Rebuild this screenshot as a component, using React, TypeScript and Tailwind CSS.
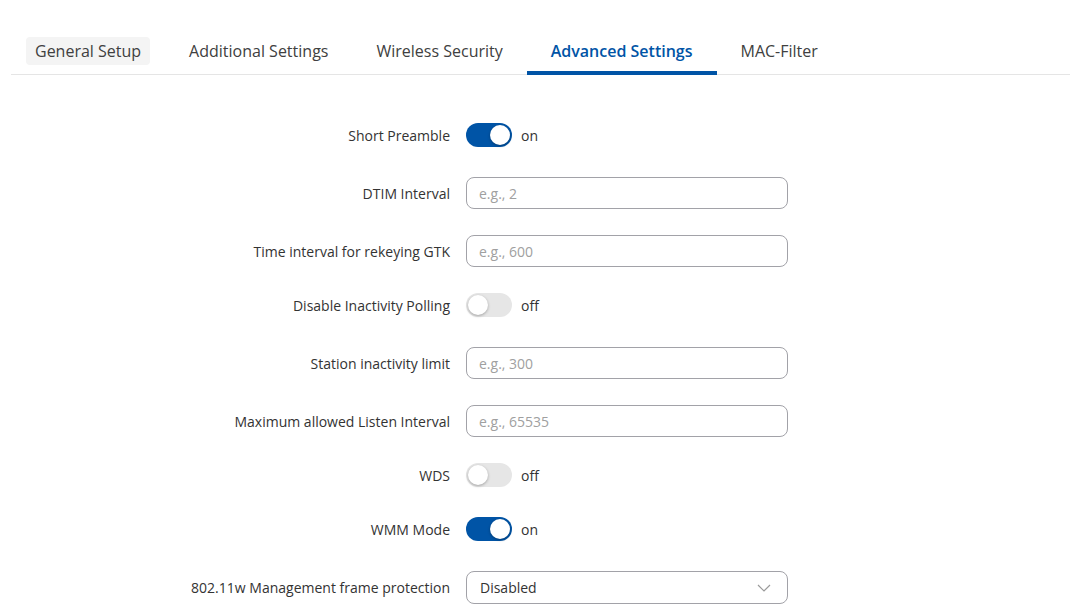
import { useState } from "react";

const tabs = ["General Setup", "Additional Settings", "Wireless Security", "Advanced Settings", "MAC-Filter"];

type Row =
  | { kind: "toggle"; label: string; on: boolean }
  | { kind: "input"; label: string; placeholder: string }
  | { kind: "select"; label: string; value: string };

const rows: Row[] = [
  { kind: "toggle", label: "Short Preamble", on: true },
  { kind: "input", label: "DTIM Interval", placeholder: "e.g., 2" },
  { kind: "input", label: "Time interval for rekeying GTK", placeholder: "e.g., 600" },
  { kind: "toggle", label: "Disable Inactivity Polling", on: false },
  { kind: "input", label: "Station inactivity limit", placeholder: "e.g., 300" },
  { kind: "input", label: "Maximum allowed Listen Interval", placeholder: "e.g., 65535" },
  { kind: "toggle", label: "WDS", on: false },
  { kind: "toggle", label: "WMM Mode", on: true },
  { kind: "select", label: "802.11w Management frame protection", value: "Disabled" },
];

function Toggle({ initial }: { initial: boolean }) {
  const [on, setOn] = useState(initial);
  return (
    <div className="flex items-center">
      <button
        onClick={() => setOn(!on)}
        className={`relative w-[46px] h-[24px] rounded-full ${on ? "bg-[#0054a6]" : "bg-[#e6e6e6]"}`}
      >
        <span
          className={`absolute top-[2px] w-[20px] h-[20px] rounded-full bg-white shadow-[0_1px_3px_rgba(0,0,0,0.3)] ${
            on ? "left-[24px]" : "left-[2px]"
          }`}
        />
      </button>
      <span className="ml-[9px] text-[14px] text-[#333]">{on ? "on" : "off"}</span>
    </div>
  );
}

export default function App() {
  const active = "Advanced Settings";
  return (
    <div className="min-h-screen bg-white text-[#333]" style={{ fontFamily: '"Open Sans", "Noto Sans", sans-serif' }}>
      <nav className="ml-[11px] mt-[31px] flex border-b border-[#e5e5e5]">
        {tabs.map((t) => {
          const isActive = t === active;
          return (
            <div
              key={t}
              className={`h-[44px] -mb-px px-[15px] flex items-center border-b-4 ${
                isActive ? "border-[#0054a6]" : "border-transparent"
              }`}
            >
              <span
                className={`h-[28px] flex items-center px-[9px] rounded text-[16px] ${
                  t === "General Setup" ? "bg-[#f4f4f4]" : ""
                } ${isActive ? "text-[#0054a6] font-semibold" : "text-[#404040]"}`}
              >
                {t}
              </span>
            </div>
          );
        })}
      </nav>

      <div className="mt-[48px] flex flex-col gap-[26px]">
        {rows.map((r) => (
          <div key={r.label} className={`flex gap-4 ${r.kind === "toggle" ? "pb-1" : ""}`}>
            <label className={`w-[450px] text-right text-[14px] text-[#333] flex items-center justify-end ${r.kind === "toggle" ? "h-[24px]" : "h-[32px]"}`}>
              {r.label}
            </label>
            {r.kind === "toggle" && <Toggle initial={r.on} />}
            {r.kind === "input" && (
              <input
                placeholder={r.placeholder}
                className="w-[322px] h-[32px] px-3 rounded-lg border border-[#a2a2a8] text-[14px] text-[#333] placeholder:text-[#a0a0a0] outline-none"
              />
            )}
            {r.kind === "select" && (
              <div className="w-[322px] h-[33px] pl-[13px] pr-[16px] rounded-lg border border-[#a2a2a8] flex items-center justify-between text-[14px] text-[#333]">
                <span>{r.value}</span>
                <svg width="14" height="8" viewBox="0 0 14 8" fill="none">
                  <path d="M1 1l6 6 6-6" stroke="#9a9a9a" strokeWidth="1.2" />
                </svg>
              </div>
            )}
          </div>
        ))}
      </div>
    </div>
  );
}
